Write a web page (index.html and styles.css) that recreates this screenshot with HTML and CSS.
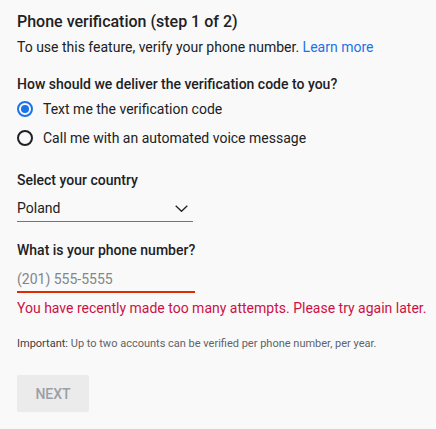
FILE: index.html
```html
<!DOCTYPE html>
<html lang="en">
<head>
<meta charset="utf-8">
<title>Phone verification</title>
<link rel="stylesheet" href="styles.css">
</head>
<body>
<main class="page">
  <h1 class="title">Phone verification (step 1 of 2)</h1>
  <p class="intro">To use this feature, verify your phone number. <a class="link" href="#">Learn more</a></p>

  <h2 class="label label-first">How should we deliver the verification code to you?</h2>
  <div class="radios">
    <label class="radio-row"><span class="radio checked"><span class="dot"></span></span><span class="radio-text">Text me the verification code</span></label>
    <label class="radio-row"><span class="radio"></span><span class="radio-text">Call me with an automated voice message</span></label>
  </div>

  <h2 class="label label-country">Select your country</h2>
  <div class="select">
    <span class="select-value">Poland</span>
    <svg class="chevron" width="13" height="7" viewBox="0 0 13 7"><path d="M0.7 0.7 L6.5 6.3 L12.3 0.7" fill="none" stroke="#202124" stroke-width="1.3"/></svg>
  </div>

  <h2 class="label label-phone">What is your phone number?</h2>
  <div class="phone-input"><span class="placeholder">(201) 555-5555</span></div>
  <p class="error">You have recently made too many attempts. Please try again later.</p>

  <p class="note"><span class="note-strong">Important:</span> Up to two accounts can be verified per phone number, per year.</p>

  <button class="next" type="button">NEXT</button>
</main>
</body>
</html>
```

FILE: styles.css
```css
html, body {
  margin: 0;
  padding: 0;
  background: #f9f9f9;
}
body {
  font-family: Roboto, "Liberation Sans", sans-serif;
  color: #202124;
  width: 436px;
  height: 429px;
  overflow: hidden;
}
.page {
  padding: 10px 0 0 17px;
  display: flex;
  flex-direction: column;
  align-items: flex-start;
}
.title {
  margin: 0;
  font-size: 16px;
  font-weight: 500;
  line-height: 24px;
}
.intro {
  margin: 3px 0 0;
  font-size: 14px;
  line-height: 20px;
}
.link {
  color: #1a73e8;
  text-decoration: none;
}
.label {
  margin: 0;
  font-size: 14px;
  font-weight: 500;
  line-height: 20px;
}
.label-first { margin-top: 17px; }
.label-country { margin-top: 22px; }
.label-phone { margin-top: 18px; }
.radios {
  margin-top: 5px;
  display: flex;
  flex-direction: column;
  gap: 9px;
}
.radio-row {
  display: flex;
  align-items: center;
  gap: 10px;
  font-size: 14px;
  line-height: 20px;
}
.radio {
  box-sizing: border-box;
  width: 16px;
  height: 16px;
  border: 2px solid #202124;
  border-radius: 50%;
  display: flex;
  align-items: center;
  justify-content: center;
}
.radio.checked {
  border-color: #1a73e8;
}
.dot {
  width: 8px;
  height: 8px;
  border-radius: 50%;
  background: #1a73e8;
}
.select {
  margin-top: 8px;
  width: 176px;
  padding-bottom: 3px;
  border-bottom: 1px solid #757575;
  display: flex;
  align-items: center;
  justify-content: space-between;
  font-size: 14px;
  line-height: 20px;
}
.chevron {
  margin-right: 5px;
}
.phone-input {
  margin-top: 9px;
  width: 178px;
  padding-bottom: 2px;
  border-bottom: 2px solid #dd2c00;
  font-size: 14px;
  line-height: 20px;
}
.placeholder {
  color: #80868b;
}
.error {
  margin: 5px 0 0;
  font-size: 14px;
  line-height: 20px;
  color: #cc1145;
}
.note {
  margin: 18px 0 0;
  font-size: 11px;
  line-height: 16px;
  color: #5f6368;
}
.note-strong {
  color: #3c4043;
}
.next {
  margin-top: 23px;
  width: 72px;
  height: 37px;
  border: none;
  border-radius: 2px;
  background: #ebebeb;
  color: #9aa0a6;
  font-family: Roboto, "Liberation Sans", sans-serif;
  font-size: 14px;
  font-weight: 500;
  padding: 0;
}
```
